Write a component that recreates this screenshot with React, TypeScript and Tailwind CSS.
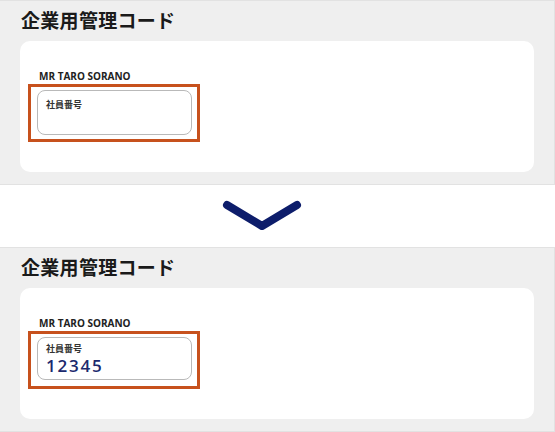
import React from "react";

// Before / after view of the company code field

const JP = { fontFamily: '"Noto Sans CJK JP", "Noto Sans", sans-serif' };
const LATIN = { fontFamily: '"Open Sans", "Noto Sans", sans-serif' };

function CodePanel({ value, compact }: { value?: string; compact?: boolean }) {
  return (
    <section className="bg-[#efefef] border-y border-r border-[#e2e2e2] px-5 h-[185px] flex flex-col">
      <h2
        className="h-[39px] flex items-center pl-[1px] text-[19px] font-bold text-[#1a1a1a] tracking-[0.3px]"
        style={JP}
      >
        企業用管理コード
      </h2>
      <div className="mt-[1px] h-[131px] bg-white rounded-[10px] pt-[29px] pl-[8px]">
        <p className="ml-[11px] mb-[2px] text-[10px] leading-[12px] font-bold text-[#222]" style={LATIN}>
          MR TARO SORANO
        </p>
        <div className="w-[172px] h-[58px] border-[3px] border-[#c7511d] pt-[3px] pl-[6px]">
          <div
            className={`w-[155px] ${compact ? "h-[43px] pt-[5px]" : "h-[45px] pt-[8px]"} border border-[#b9b9b9] rounded-[8px] pl-[8px]`}
          >
            <p className="text-[9px] leading-[12px] font-bold text-[#333]" style={JP}>
              社員番号
            </p>
            {value && (
              <p
                className="mt-[2px] text-[17px] leading-[18px] font-semibold tracking-[1.8px] text-[#1b2a6e]"
                style={LATIN}
              >
                {value}
              </p>
            )}
          </div>
        </div>
      </div>
    </section>
  );
}

export default function App() {
  return (
    <div className="w-[555px] h-[432px] bg-white overflow-hidden">
      <CodePanel />
      <div className="h-[62px] flex items-center justify-center">
        <svg width="555" height="62" viewBox="0 0 555 62">
          <polyline
            points="227,20 262,41 297,20"
            fill="none"
            stroke="#0d1d6b"
            strokeWidth="8"
            strokeLinecap="round"
            strokeLinejoin="round"
          />
        </svg>
      </div>
      <CodePanel value="12345" compact />
    </div>
  );
}
